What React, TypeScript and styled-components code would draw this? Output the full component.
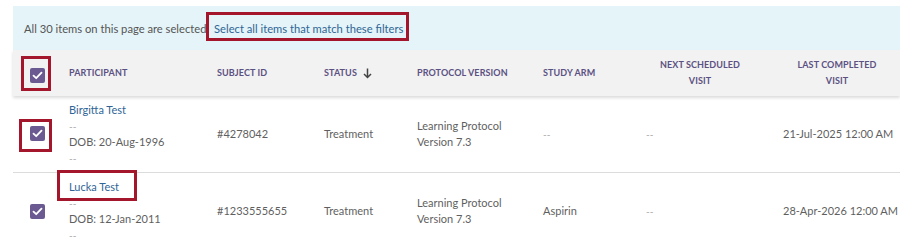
import React from 'react';
import styled, { createGlobalStyle } from 'styled-components';

const GlobalStyle = createGlobalStyle`
  body {
    margin: 0;
    background: #fff;
    font-family: Lato, "Open Sans", Arial, sans-serif;
  }
`;

const COLUMNS = '56px 148px 107px 93px 126px 103px 137px 1fr';

interface HighlightProps {
  top: number,
  right: number,
  bottom: number,
  left: number,
}

const Page = styled.div`
  padding: 6px 0 0 13px;
  width: 900px;
  height: 246px;
  box-sizing: border-box;
  overflow: hidden;
`;

const Banner = styled.div`
  display: flex;
  align-items: center;
  height: 44px;
  padding-left: 11px;
  background: #e4f4f8;
  font-size: 11.2px;
  color: #555;
`;

const Highlight = styled.span<HighlightProps>`
  position: relative;

  &::after {
    content: '';
    position: absolute;
    top: ${props => -props.top}px;
    right: ${props => -props.right}px;
    bottom: ${props => -props.bottom}px;
    left: ${props => -props.left}px;
    border: 3px solid #a3162b;
    pointer-events: none;
  }
`;

const Link = styled.a`
  color: #2f6596;
  text-decoration: none;
  cursor: pointer;
`;

const BannerLink = styled(Link)`
  margin-left: 5px;
`;

const HeaderRow = styled.div`
  position: relative;
  display: grid;
  grid-template-columns: ${COLUMNS};
  align-items: center;
  height: 46px;
  background: #f2f2f2;
  box-shadow: 0 2px 3px rgba(0, 0, 0, 0.14);
`;

const HeaderLabel = styled.div<{ centered?: boolean }>`
  display: flex;
  align-items: center;
  gap: 6px;
  width: ${props => (props.centered ? '96px' : 'auto')};
  margin-left: ${props => (props.centered ? '6px' : '0')};
  text-align: ${props => (props.centered ? 'center' : 'left')};
  justify-content: ${props => (props.centered ? 'center' : 'flex-start')};
  font-size: 9px;
  font-weight: 700;
  line-height: 16px;
  letter-spacing: 0.1px;
  text-transform: uppercase;
  color: #5b5182;
`;

const CheckCell = styled.div`
  padding-left: 17px;
  display: flex;
  align-items: center;
`;

const Box = styled.span`
  display: inline-flex;
  align-items: center;
  justify-content: center;
  width: 15px;
  height: 15px;
  border-radius: 2px;
  background: #6b5a91;
`;

const Row = styled.div`
  display: grid;
  grid-template-columns: ${COLUMNS};
  align-items: center;
  padding: 6px 0;
  border-bottom: 1px solid #dcdcdc;
  font-size: 11px;
  line-height: 16px;
  color: #5f5f5f;
`;

const Stack = styled.div`
  display: flex;
  flex-direction: column;
  align-items: flex-start;
`;

const Faint = styled.span`
  color: #a5a5a5;
  font-size: 10px;
`;

const Checkbox = () => (
  <Box>
    <svg width="11" height="9" viewBox="0 0 11 9">
      <path d="M1.5 4.6 L4.2 7.2 L9.5 1.6" fill="none" stroke="#fff" strokeWidth="1.8" strokeLinecap="round" strokeLinejoin="round" />
    </svg>
  </Box>
);

const SortArrow = () => (
  <svg width="9" height="11" viewBox="0 0 9 11">
    <path d="M4.5 0.5 V9.5 M1 6 L4.5 9.5 L8 6" fill="none" stroke="#444" strokeWidth="1.5" />
  </svg>
);

interface Participant {
  name: string,
  dob: string,
  subjectId: string,
  status: string,
  arm: string,
  next: string,
  last: string,
  boxCheck?: HighlightProps,
  boxName?: HighlightProps,
}

const rows: Participant[] = [
  {
    name: 'Birgitta Test',
    dob: '20-Aug-1996',
    subjectId: '#4278042',
    status: 'Treatment',
    arm: '--',
    next: '--',
    last: '21-Jul-2025 12:00 AM',
    boxCheck: { top: 7, right: 7, bottom: 10, left: 11 },
  },
  {
    name: 'Lucka Test',
    dob: '12-Jan-2011',
    subjectId: '#1233555655',
    status: 'Treatment',
    arm: 'Aspirin',
    next: '--',
    last: '28-Apr-2026 12:00 AM',
    boxName: { top: 9, right: 18, bottom: 6, left: 12 },
  },
];

const App = () => (
  <Page>
    <GlobalStyle />
    <Banner>
      All 30 items on this page are selected.
      <Highlight top={10} right={6} bottom={6} left={3}>
        <BannerLink>Select all items that match these filters</BannerLink>
      </Highlight>
    </Banner>
    <HeaderRow>
      <CheckCell>
        <Highlight top={8} right={6} bottom={8} left={9}>
          <Checkbox />
        </Highlight>
      </CheckCell>
      <HeaderLabel>Participant</HeaderLabel>
      <HeaderLabel>Subject ID</HeaderLabel>
      <HeaderLabel>Status <SortArrow /></HeaderLabel>
      <HeaderLabel>Protocol Version</HeaderLabel>
      <HeaderLabel>Study Arm</HeaderLabel>
      <HeaderLabel centered>Next Scheduled Visit</HeaderLabel>
      <HeaderLabel centered>Last Completed Visit</HeaderLabel>
    </HeaderRow>
    {rows.map(r => (
      <Row key={r.name}>
        <CheckCell>
          {r.boxCheck ? (
            <Highlight {...r.boxCheck}><Checkbox /></Highlight>
          ) : (
            <Checkbox />
          )}
        </CheckCell>
        <Stack>
          {r.boxName ? (
            <Highlight {...r.boxName}><Link>{r.name}</Link></Highlight>
          ) : (
            <Link>{r.name}</Link>
          )}
          <Faint>--</Faint>
          <span>DOB: {r.dob}</span>
          <Faint>--</Faint>
        </Stack>
        <div>{r.subjectId}</div>
        <div>{r.status}</div>
        <div>Learning Protocol<br />Version 7.3</div>
        <div>{r.arm === '--' ? <Faint>--</Faint> : r.arm}</div>
        <div><Faint>{r.next}</Faint></div>
        <div>{r.last}</div>
      </Row>
    ))}
  </Page>
);

export default App;
